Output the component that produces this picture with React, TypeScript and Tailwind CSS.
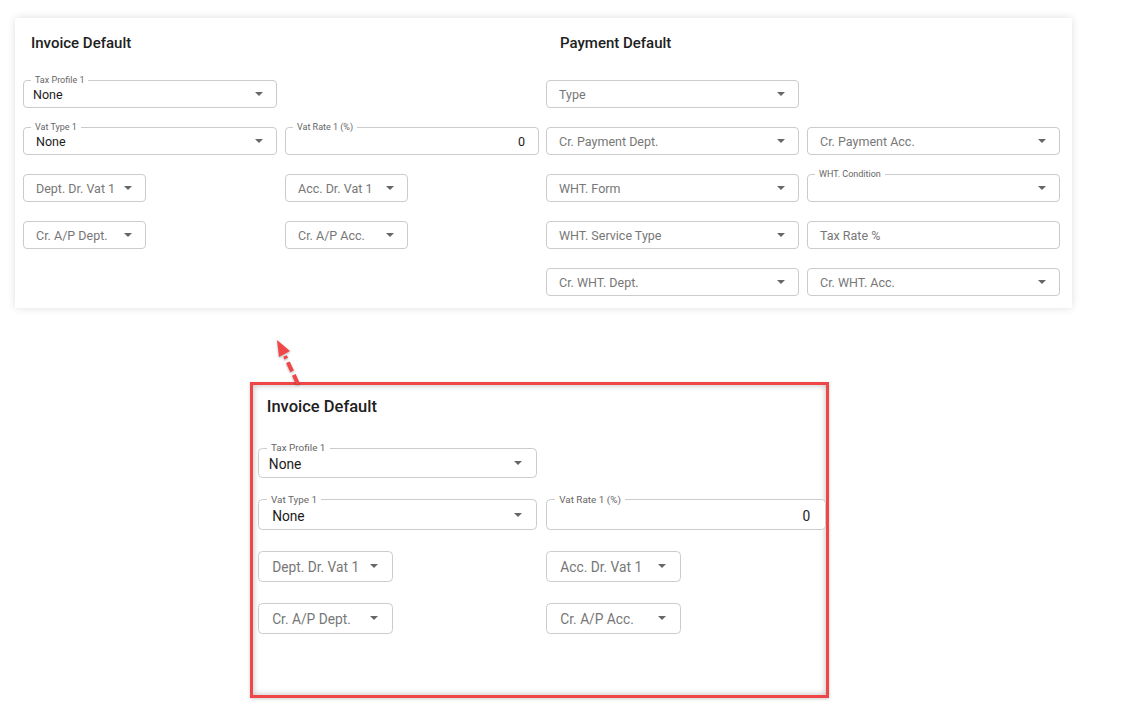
import React from 'react';

type FieldProps = {
  label?: string;
  value?: string;
  placeholder?: string;
  arrow?: boolean;
  small?: boolean;
  right?: boolean;
  pad?: string;
};

const Field = ({ label, value, placeholder, arrow = true, small = false, right = false, pad = 'pl-[12px]' }: FieldProps) => {
  return (
    <div
      className={`relative flex h-[28px] items-center rounded-[4px] border border-[#cbcbcb] bg-white ${
        small ? 'w-[123px]' : 'w-full'
      }`}
    >
      {label && (
        <span className="absolute -top-[6px] left-[7px] bg-white px-[4px] text-[9px] leading-[10px] text-[#666666]">
          {label}
        </span>
      )}
      <div
        className={`flex-1 truncate pt-[2px] text-[12.5px] ${pad} ${right ? 'pr-[13px] text-right' : ''} ${
          value ? 'text-[#1c1c1c]' : 'text-[#777777]'
        }`}
      >
        {value ?? placeholder}
      </div>
      {arrow && (
        <span className="mr-[13px] ml-2 h-0 w-0 border-x-[4px] border-t-[4px] border-x-transparent border-t-[#666666]" />
      )}
    </div>
  );
};

const InvoiceSection = () => (
  <div className="w-[516px]">
    <h2 className="h-[20px] pl-2 text-[15px] leading-[20px] font-medium text-[#212121]">Invoice Default</h2>
    <div className="mt-[27px] grid grid-cols-[254px_254px] gap-x-2 gap-y-[19px]">
      <Field label="Tax Profile 1" value="None" pad="pl-[9px]" />
      <div />
      <Field label="Vat Type 1" value="None" />
      <Field label="Vat Rate 1 (%)" value="0" arrow={false} right />
      <Field placeholder="Dept. Dr. Vat 1" small />
      <Field placeholder="Acc. Dr. Vat 1" small />
      <Field placeholder="Cr. A/P Dept." small />
      <Field placeholder="Cr. A/P Acc." small />
    </div>
  </div>
);

const PaymentSection = () => (
  <div className="-ml-px w-[514px]">
    <h2 className="h-[20px] pl-[14px] text-[15px] leading-[20px] font-medium text-[#212121]">Payment Default</h2>
    <div className="mt-[27px] grid grid-cols-[253px_253px] gap-x-2 gap-y-[19px]">
      <Field placeholder="Type" />
      <div />
      <Field placeholder="Cr. Payment Dept." />
      <Field placeholder="Cr. Payment Acc." />
      <Field placeholder="WHT. Form" />
      <Field label="WHT. Condition" />
      <Field placeholder="WHT. Service Type" />
      <Field placeholder="Tax Rate %" arrow={false} />
      <Field placeholder="Cr. WHT. Dept." />
      <Field placeholder="Cr. WHT. Acc." />
    </div>
  </div>
);

export default function App() {
  return (
    <div className="relative min-h-screen bg-white pt-[18px] pl-[15px] font-['Roboto','Liberation_Sans',sans-serif]">
      {/* Original card */}
      <div className="flex h-[290px] w-[1057px] gap-x-2 bg-white pt-[15px] pl-2 shadow-[0_0_8px_rgba(0,0,0,0.13)]">
        <InvoiceSection />
        <PaymentSection />
      </div>

      {/* Zoomed callout */}
      <div className="mt-[74px] ml-[235px] h-[316px] w-[579px] overflow-hidden border-[3px] border-[#ef4747] bg-white shadow-[0_1px_3px_rgba(0,0,0,0.2)]">
        <div className="h-full w-full shadow-[inset_0_0_6px_rgba(0,0,0,0.28)]">
          <div className="pt-[10px] pl-[4.5px] [zoom:1.1]">
            <InvoiceSection />
          </div>
        </div>
      </div>

      {/* Pointer arrow */}
      <svg
        className="pointer-events-none absolute top-[330px] left-[265px] drop-shadow-[0_1px_1px_rgba(0,0,0,0.3)]"
        width="45"
        height="60"
        viewBox="265 330 45 60"
      >
        <line
          x1="298"
          y1="384"
          x2="285"
          y2="356"
          stroke="#f04848"
          strokeWidth="4"
          strokeDasharray="10 4"
        />
        <polygon points="277,340 290,351 279,357" fill="#f04848" />
      </svg>
    </div>
  );
}
